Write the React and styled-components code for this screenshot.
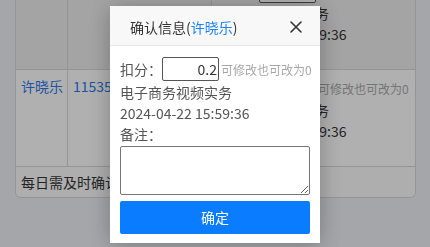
import React from 'react'
import styled, { createGlobalStyle } from 'styled-components'

const GlobalStyle = createGlobalStyle`
  html, body { margin: 0; padding: 0; }
  body {
    background: #eceef4;
    font-family: "Noto Sans CJK SC", "Noto Sans", sans-serif;
    font-size: 14px;
    color: #333;
    overflow: hidden;
  }
`

const rows = [
  { name: '许晓乐', id: '11535201903', course: '电子商务视频实务', time: '2024-04-22 15:59:36', bg: '#ebebeb' },
  { name: '许晓乐', id: '11535201904', course: '电子商务视频实务', time: '2024-04-22 15:59:36', bg: '#fdfdfd' },
]

const Page = styled.div`
  width: 430px;
  height: 247px;
  padding-left: 15px;
  box-sizing: border-box;
  overflow: hidden;
`

const Card = styled.div`
  width: 399px;
  margin-top: -27px;
  border: 1px solid #d6d6d6;
  border-top: none;
  border-radius: 0 0 6px 6px;
  overflow: hidden;
  background: #fff;
`

const Row = styled.div`
  display: grid;
  grid-template-columns: 52px 144px 1fr;
  height: 97px;
  box-sizing: border-box;
  border-bottom: 1px solid #d6d6d6;
  background: ${p => p.$bg};
`

const Cell = styled.div`
  padding: 6px 5px;
  line-height: 21px;
  border-right: 1px solid #d6d6d6;
  color: ${p => (p.$link ? '#2a78e8' : '#333')};
  white-space: nowrap;
  overflow: hidden;
  &:last-child { border-right: none; }
`

const ScoreLine = styled.div`
  display: flex;
  align-items: center;
  height: 24px;
`

const Label = styled.span`
  width: 42px;
  color: ${p => p.$color || '#555'};
  flex: none;
`

const ScoreInput = styled.input`
  width: 57px;
  height: 24px;
  box-sizing: border-box;
  border: 1px solid #555;
  border-radius: 2px;
  padding: 0 1px;
  text-align: right;
  font: inherit;
  font-size: 14px;
  color: #333;
  background: #fff;
  outline: none;
  flex: none;
`

const Hint = styled.span`
  margin-left: 2px;
  font-size: 12px;
  color: #a8a8a8;
  white-space: nowrap;
`

const Footer = styled.div`
  height: 30px;
  line-height: 30px;
  padding: 0 5px;
  background: #f9f9f9;
  color: #333;
`

const Mask = styled.div`
  position: fixed;
  inset: 0;
  background: rgba(0, 0, 0, 0.3);
`

const Modal = styled.div`
  position: fixed;
  left: 110px;
  top: 6px;
  width: 210px;
  background: #fff;
  box-shadow: 0 2px 22px rgba(0, 0, 0, 0.28);
`

const ModalHeader = styled.div`
  display: flex;
  align-items: center;
  justify-content: space-between;
  height: 40px;
  padding: 2px 18px 0 20px;
  box-sizing: border-box;
  background: #f8f8f8;
  border-bottom: 1px solid #e6e6e6;
  color: #333;
`

const Blue = styled.span`
  color: #1c82f2;
`

const CloseButton = styled.button`
  width: 12px;
  height: 12px;
  padding: 0;
  border: none;
  background: none;
  display: flex;
  cursor: pointer;
`

const ModalBody = styled.div`
  padding: 11px 10px 9px;
  line-height: 21px;
  color: #555;
`

const FormLine = styled(ScoreLine)`
  margin-bottom: 1px;
`

const Remark = styled.textarea`
  display: block;
  width: 190px;
  height: 49px;
  box-sizing: border-box;
  margin: 1px 0 0;
  border: 1px solid #767676;
  border-radius: 2px;
  font: inherit;
`

const Confirm = styled.button`
  display: block;
  width: 100%;
  height: 33px;
  margin-top: 6px;
  border: none;
  border-radius: 2px;
  background: #0a7cff;
  color: #fff;
  font: inherit;
  font-size: 14px;
  cursor: pointer;
`

export default function App() {
  return (
    <>
      <GlobalStyle />
      <Page>
        <Card>
          {rows.map((r, i) => (
            <Row key={i} $bg={r.bg}>
              <Cell $link>{r.name}</Cell>
              <Cell $link>{r.id}</Cell>
              <Cell>
                <ScoreLine>
                  <Label>扣分：</Label>
                  <ScoreInput defaultValue="0.2" />
                  <Hint>可修改也可改为0</Hint>
                </ScoreLine>
                <div>{r.course}</div>
                <div>{r.time}</div>
              </Cell>
            </Row>
          ))}
          <Footer>每日需及时确认扣分信息</Footer>
        </Card>
      </Page>
      <Mask />
      <Modal>
        <ModalHeader>
          <span>确认信息(<Blue>许晓乐</Blue>)</span>
          <CloseButton aria-label="关闭">
            <svg width="12" height="12" viewBox="0 0 12 12">
              <path d="M1 1L11 11M11 1L1 11" stroke="#333" strokeWidth="1.6" strokeLinecap="round" />
            </svg>
          </CloseButton>
        </ModalHeader>
        <ModalBody>
          <FormLine>
            <Label>扣分：</Label>
            <ScoreInput defaultValue="0.2" />
            <Hint>可修改也可改为0</Hint>
          </FormLine>
          <div>电子商务视频实务</div>
          <div>2024-04-22 15:59:36</div>
          <div>备注：</div>
          <Remark />
          <Confirm>确定</Confirm>
        </ModalBody>
      </Modal>
    </>
  )
}
